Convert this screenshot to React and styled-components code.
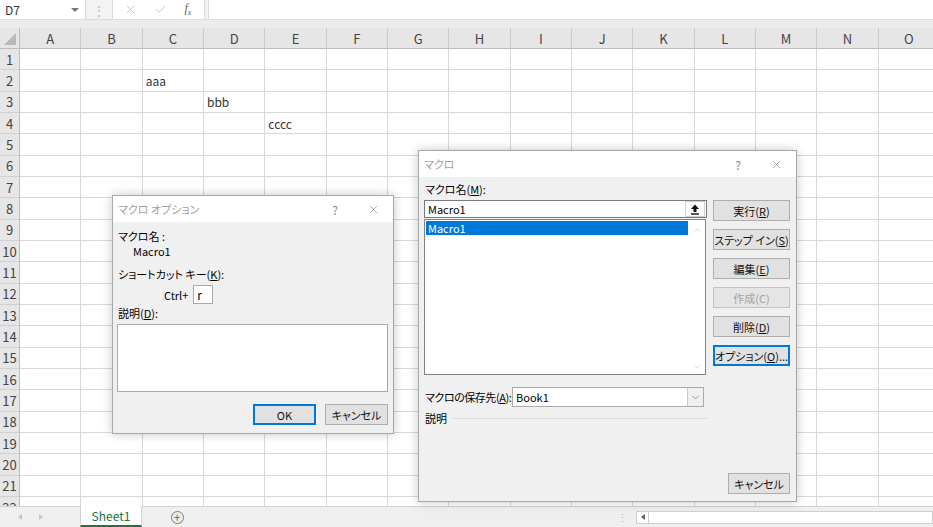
import styled, { createGlobalStyle } from 'styled-components';
import { X, Check, ChevronUp, ChevronDown } from 'lucide-react';

const COLUMNS = ['A', 'B', 'C', 'D', 'E', 'F', 'G', 'H', 'I', 'J', 'K', 'L', 'M', 'N', 'O'];
const ROW_COUNT = 22;
const CELL_TEXT = { C2: 'aaa', D3: 'bbb', E4: 'cccc' };

const GlobalStyle = createGlobalStyle`
    html, body {
        margin: 0;
        padding: 0;
        overflow: hidden;
    }
    body {
        font-family: "Noto Sans CJK JP", "Noto Sans", sans-serif;
        font-feature-settings: "palt";
        color: #222;
    }
    * {
        box-sizing: border-box;
    }
`;

const Screen = styled.div`
    position: relative;
    width: 933px;
    height: 527px;
    display: flex;
    flex-direction: column;
    background-color: #fff;
    overflow: hidden;
`;

/* ---------- formula bar ---------- */

const FormulaBar = styled.div`
    height: 20px;
    display: flex;
    background-color: #f3f3f3;
    border-bottom: 1px solid #dcdcdc;
`;

const NameBox = styled.div`
    width: 86px;
    display: flex;
    align-items: center;
    justify-content: space-between;
    padding: 0 5px 0 5px;
    background-color: #fff;
    border-right: 1px solid #d6d6d6;
    font-size: 12px;
    color: #333;
`;

const DropArrow = styled.span`
    width: 0;
    height: 0;
    border-left: 4px solid transparent;
    border-right: 4px solid transparent;
    border-top: 4px solid #777;
    margin-right: 1px;
`;

const Grip = styled.div`
    width: 26px;
    display: flex;
    align-items: center;
    justify-content: center;
    color: #b8b8b8;
    font-size: 12px;
`;

const FxBox = styled.div`
    width: 93px;
    display: flex;
    align-items: center;
    justify-content: space-around;
    padding: 0 4px 0 2px;
    background-color: #fff;
    border-left: 1px solid #dadada;
    border-right: 1px solid #dadada;
    color: #b0b0b0;
`;

const FxText = styled.span`
    font-family: "Liberation Serif", serif;
    font-style: italic;
    font-size: 12px;
    color: #666;
`;

const FormulaInput = styled.div`
    flex: 1;
    margin-left: 3px;
    background-color: #fff;
    border-left: 1px solid #dadada;
`;

/* ---------- sheet grid ---------- */

const Sheet = styled.div`
    flex: 1;
    overflow: hidden;
    padding-top: 8px;
    background-color: #ececec;
`;

const Grid = styled.div`
    display: grid;
    grid-template-columns: 20px repeat(15, 61.34px);
    grid-template-rows: 21px;
    grid-auto-rows: 21.34px;
`;

const Corner = styled.div`
    position: relative;
    background-color: #e6e6e6;
    border-right: 1px solid #bcbcbc;
    border-bottom: 1px solid #bcbcbc;

    &::after {
        content: '';
        position: absolute;
        right: 3px;
        bottom: 3px;
        width: 0;
        height: 0;
        border-left: 12px solid transparent;
        border-bottom: 12px solid #b9b9b9;
    }
`;

const ColHead = styled.div`
    display: flex;
    align-items: center;
    justify-content: center;
    background-color: #e6e6e6;
    border-right: 1px solid #c9c9c9;
    border-bottom: 1px solid #bcbcbc;
    font-size: 13px;
    color: #444;
`;

const RowHead = styled.div`
    display: flex;
    align-items: center;
    justify-content: center;
    background-color: #e6e6e6;
    border-right: 1px solid #bcbcbc;
    border-bottom: 1px solid #d0d0d0;
    font-size: 13px;
    color: #444;
`;

const Cell = styled.div`
    display: flex;
    align-items: center;
    padding-left: 3px;
    background-color: #fff;
    border-right: 1px solid #d8d8d8;
    border-bottom: 1px solid #d8d8d8;
    font-size: 12px;
    color: #333;
    white-space: nowrap;
`;

/* ---------- sheet tabs ---------- */

const TabBar = styled.div`
    height: 21px;
    display: flex;
    align-items: stretch;
    background-color: #efefef;
    border-top: 1px solid #d2d2d2;
`;

const TabNav = styled.div`
    width: 80px;
    display: flex;
    align-items: center;
    gap: 17px;
    padding-left: 18px;
`;

const NavTriangle = styled.span`
    width: 0;
    height: 0;
    border-top: 3px solid transparent;
    border-bottom: 3px solid transparent;
    ${({ $dir }) => ($dir === 'left' ? 'border-right: 4px solid #c4c4c4;' : 'border-left: 4px solid #c4c4c4;')}
`;

const SheetTab = styled.div`
    width: 62px;
    display: flex;
    align-items: center;
    justify-content: center;
    background-color: #fff;
    border-left: 1px solid #d2d2d2;
    border-right: 1px solid #d2d2d2;
    border-bottom: 2px solid #217346;
    margin-top: -1px;
    font-size: 12px;
    color: #217346;
`;

const AddSheet = styled.div`
    width: 70px;
    display: flex;
    align-items: center;
    justify-content: center;
`;

const AddCircle = styled.span`
    width: 13px;
    height: 13px;
    border: 1px solid #7a7a7a;
    border-radius: 50%;
    display: flex;
    align-items: center;
    justify-content: center;
    font-size: 12px;
    line-height: 1;
    color: #666;
`;

const TabSpacer = styled.div`
    flex: 1;
`;

const TabGrip = styled.div`
    width: 14px;
    display: flex;
    align-items: center;
    justify-content: center;
    color: #b8b8b8;
    font-size: 11px;
    margin-right: 7px;
`;

const HScroll = styled.div`
    width: 297px;
    height: 13px;
    align-self: center;
    display: flex;
    background-color: #fff;
    border: 1px solid #cfcfcf;
`;

const HScrollArrow = styled.div`
    width: 12px;
    display: flex;
    align-items: center;
    justify-content: center;
    border-right: 1px solid #cfcfcf;

    &::before {
        content: '';
        border-top: 3px solid transparent;
        border-bottom: 3px solid transparent;
        border-right: 4px solid #606060;
    }
`;

/* ---------- dialogs ---------- */

const Dialog = styled.div`
    position: absolute;
    left: ${({ $x }) => $x}px;
    top: ${({ $y }) => $y}px;
    width: ${({ $w }) => $w}px;
    height: ${({ $h }) => $h}px;
    display: flex;
    flex-direction: column;
    background-color: #f0f0f0;
    border: 1px solid #a8a8a8;
    box-shadow: 0 0 10px rgba(0, 0, 0, 0.22);
    font-size: 11px;
    color: #000;
`;

const TitleBar = styled.div`
    height: 26px;
    display: flex;
    align-items: center;
    padding-left: 5px;
    background-color: #fff;
    color: #a0a0a0;
    font-size: 11px;
`;

const TitleButtons = styled.div`
    margin-left: auto;
    display: flex;
    height: 100%;
`;

const HelpButton = styled.div`
    width: 38px;
    display: flex;
    align-items: center;
    justify-content: center;
    font-size: 12px;
    color: #8a8a8a;
`;

const CloseButton = styled.div`
    width: 39px;
    display: flex;
    align-items: center;
    justify-content: center;
    color: #7a7a7a;
`;

const Label = styled.div`
    height: 15px;
    line-height: 15px;
    padding-left: ${({ $indent }) => $indent || 1}px;
    margin-top: ${({ $gap }) => $gap || 0}px;
    white-space: nowrap;
`;

const Button = styled.div`
    width: ${({ $w }) => $w || 77}px;
    height: 21px;
    display: flex;
    align-items: center;
    justify-content: center;
    background-color: ${({ $disabled }) => ($disabled ? '#e5e5e5' : '#e1e1e1')};
    border: 1px solid ${({ $disabled, $focus }) => ($focus ? '#0078d7' : $disabled ? '#c3c3c3' : '#adadad')};
    box-shadow: ${({ $focus }) => ($focus ? 'inset 0 0 0 1px #0078d7' : 'none')};
    color: ${({ $disabled }) => ($disabled ? '#a2a2a2' : '#111')};
    font-size: 11px;
    white-space: nowrap;
`;

/* macro options dialog */

const OptionsBody = styled.div`
    flex: 1;
    display: flex;
    flex-direction: column;
    padding: 7px 5px 8px 4px;
`;

const ShortcutRow = styled.div`
    height: 19px;
    margin-top: 3px;
    display: flex;
    align-items: center;
    padding-left: 47px;
    gap: 5px;
`;

const KeyInput = styled.div`
    width: 20px;
    height: 19px;
    display: flex;
    align-items: center;
    padding-left: 3px;
    background-color: #fff;
    border: 1px solid #a8a8a8;
    font-size: 12px;
`;

const DescBox = styled.div`
    height: 68px;
    margin-top: 3px;
    background-color: #fff;
    border: 1px solid #a8a8a8;
`;

const ButtonRow = styled.div`
    margin-top: 12px;
    display: flex;
    justify-content: flex-end;
    gap: 9px;
`;

/* macro dialog */

const MacroBody = styled.div`
    flex: 1;
    display: flex;
    flex-direction: column;
    padding: 5px 6px 7px 5px;
`;

const MacroMain = styled.div`
    flex: 1;
    display: flex;
    gap: 6px;
    margin-top: 3px;
`;

const LeftColumn = styled.div`
    width: 283px;
    display: flex;
    flex-direction: column;
`;

const NameInput = styled.div`
    height: 18px;
    display: flex;
    align-items: center;
    background-color: #fff;
    border: 1px solid #7a7a7a;
`;

const NameText = styled.span`
    flex: 1;
    padding-left: 3px;
    font-size: 11px;
`;

const UploadButton = styled.div`
    width: 20px;
    height: 16px;
    display: flex;
    align-items: center;
    justify-content: center;
    margin-right: 1px;
    border: 1px solid #cfcfcf;
`;

const ListBox = styled.div`
    height: 156px;
    width: 282px;
    margin-top: 1px;
    display: flex;
    background-color: #fff;
    border: 1px solid #828282;
`;

const ListItems = styled.div`
    flex: 1;
    padding: 1px;
`;

const ListItem = styled.div`
    height: 14px;
    line-height: 14px;
    padding-left: 2px;
    background-color: ${({ $selected }) => ($selected ? '#0078d7' : 'transparent')};
    color: ${({ $selected }) => ($selected ? '#fff' : '#111')};
`;

const ListScroll = styled.div`
    width: 16px;
    display: flex;
    flex-direction: column;
    align-items: center;
    justify-content: space-between;
    padding: 5px 0 2px;
    color: #c2c2c2;
`;

const StoreRow = styled.div`
    margin-top: 12px;
    display: flex;
    align-items: center;
`;

const StoreLabel = styled.span`
    width: 88px;
    padding-left: 1px;
    letter-spacing: -0.45px;
    white-space: nowrap;
`;

const ComboBox = styled.div`
    width: 192px;
    height: 20px;
    display: flex;
    align-items: stretch;
    background-color: #fff;
    border: 1px solid #ababab;
`;

const ComboText = styled.span`
    flex: 1;
    display: flex;
    align-items: center;
    padding-left: 3px;
`;

const ComboArrow = styled.span`
    width: 16px;
    display: flex;
    align-items: center;
    justify-content: center;
    background-color: #f0f0f0;
    border-left: 1px solid #c8c8c8;
    color: #666;
`;

const DescRow = styled.div`
    margin-top: 3px;
    display: flex;
    align-items: center;
    gap: 6px;
    padding-left: 1px;
`;

const DescRule = styled.span`
    flex: 1;
    height: 1px;
    background-color: #dcdcdc;
`;

const RightColumn = styled.div`
    width: 77px;
    display: flex;
    flex-direction: column;
    gap: 8px;
`;

const BottomButton = styled.div`
    margin-top: auto;
    align-self: flex-end;
`;

const UploadIcon = () => (
    <svg width="10" height="11" viewBox="0 0 10 11">
        <path d="M5 0.5 L9 5 H6.5 V8 H3.5 V5 H1 Z" fill="#111" />
        <rect x="1" y="9.3" width="8" height="1.4" fill="#111" />
    </svg>
);

const DialogTitle = ({ children }) => (
    <TitleBar>
        {children}
        <TitleButtons>
            <HelpButton>?</HelpButton>
            <CloseButton>
                <X size={13} strokeWidth={1.1} />
            </CloseButton>
        </TitleButtons>
    </TitleBar>
);

const SpreadSheet = () => (
    <Sheet>
        <Grid>
            <Corner />
            {COLUMNS.map((c) => (
                <ColHead key={c}>{c}</ColHead>
            ))}
            {Array.from({ length: ROW_COUNT }, (_, i) => i + 1).map((r) => [
                <RowHead key={`h${r}`}>{r}</RowHead>,
                ...COLUMNS.map((c) => <Cell key={`${c}${r}`}>{CELL_TEXT[`${c}${r}`]}</Cell>),
            ])}
        </Grid>
    </Sheet>
);

const MacroOptionsDialog = () => (
    <Dialog $x={112} $y={195} $w={282} $h={239}>
        <DialogTitle>マクロ オプション</DialogTitle>
        <OptionsBody>
            <Label>マクロ名 :</Label>
            <Label $indent={16}>Macro1</Label>
            <Label $gap={8}>
                ショートカット キー(<u>K</u>):
            </Label>
            <ShortcutRow>
                <span>Ctrl+</span>
                <KeyInput>r</KeyInput>
            </ShortcutRow>
            <Label $gap={2}>
                説明(<u>D</u>):
            </Label>
            <DescBox />
            <ButtonRow>
                <Button $w={63} $focus>OK</Button>
                <Button $w={63}>キャンセル</Button>
            </ButtonRow>
        </OptionsBody>
    </Dialog>
);

const MacroDialog = () => (
    <Dialog $x={418} $y={150} $w={379} $h={352}>
        <DialogTitle>マクロ</DialogTitle>
        <MacroBody>
            <Label>
                マクロ名(<u>M</u>):
            </Label>
            <MacroMain>
                <LeftColumn>
                    <NameInput>
                        <NameText>Macro1</NameText>
                        <UploadButton>
                            <UploadIcon />
                        </UploadButton>
                    </NameInput>
                    <ListBox>
                        <ListItems>
                            <ListItem $selected>Macro1</ListItem>
                        </ListItems>
                        <ListScroll>
                            <ChevronUp size={10} strokeWidth={1.5} />
                            <ChevronDown size={10} strokeWidth={1.5} />
                        </ListScroll>
                    </ListBox>
                    <StoreRow>
                        <StoreLabel>
                            マクロの保存先(<u>A</u>):
                        </StoreLabel>
                        <ComboBox>
                            <ComboText>Book1</ComboText>
                            <ComboArrow>
                                <ChevronDown size={11} strokeWidth={1.5} />
                            </ComboArrow>
                        </ComboBox>
                    </StoreRow>
                    <DescRow>
                        <span>説明</span>
                        <DescRule />
                    </DescRow>
                </LeftColumn>
                <RightColumn>
                    <Button>
                        実行(<u>R</u>)
                    </Button>
                    <Button>
                        ステップ イン(<u>S</u>)
                    </Button>
                    <Button>
                        編集(<u>E</u>)
                    </Button>
                    <Button $disabled>作成(C)</Button>
                    <Button>
                        削除(<u>D</u>)
                    </Button>
                    <Button $focus>
                        オプション(<u>O</u>)...
                    </Button>
                    <BottomButton>
                        <Button $w={62}>キャンセル</Button>
                    </BottomButton>
                </RightColumn>
            </MacroMain>
        </MacroBody>
    </Dialog>
);

const App = () => {
    return (
        <>
            <GlobalStyle />
            <Screen>
                <FormulaBar>
                    <NameBox>
                        D7
                        <DropArrow />
                    </NameBox>
                    <Grip>⋮</Grip>
                    <FxBox>
                        <X size={13} strokeWidth={1.3} />
                        <Check size={13} strokeWidth={1.3} />
                        <FxText>
                            f<sub style={{ fontSize: 8 }}>x</sub>
                        </FxText>
                    </FxBox>
                    <FormulaInput />
                </FormulaBar>
                <SpreadSheet />
                <TabBar>
                    <TabNav>
                        <NavTriangle $dir="left" />
                        <NavTriangle $dir="right" />
                    </TabNav>
                    <SheetTab>Sheet1</SheetTab>
                    <AddSheet>
                        <AddCircle>+</AddCircle>
                    </AddSheet>
                    <TabSpacer />
                    <TabGrip>⋮</TabGrip>
                    <HScroll>
                        <HScrollArrow />
                    </HScroll>
                </TabBar>
                <MacroOptionsDialog />
                <MacroDialog />
            </Screen>
        </>
    );
};

export default App;
